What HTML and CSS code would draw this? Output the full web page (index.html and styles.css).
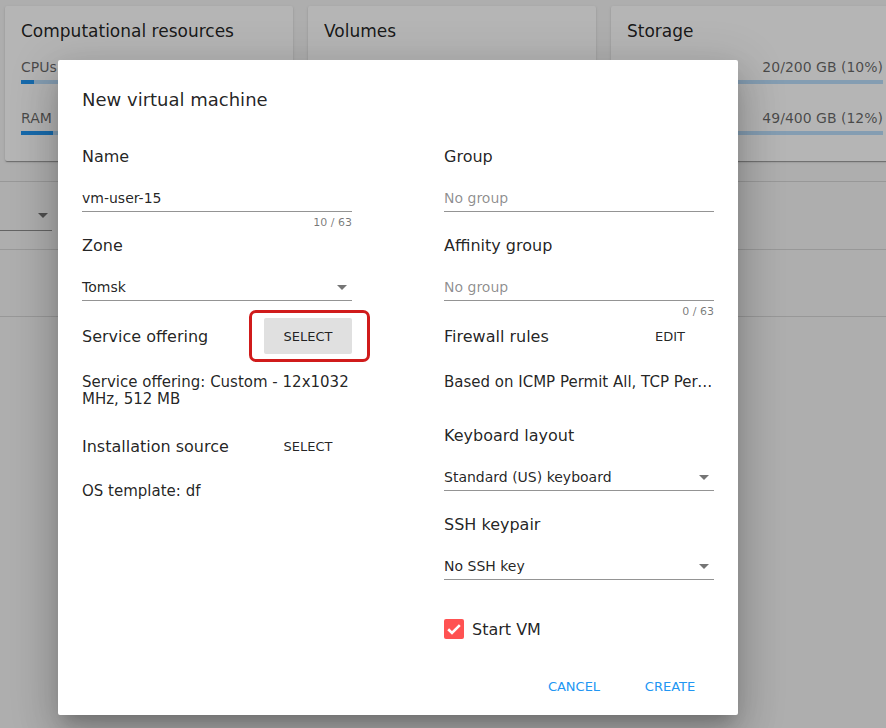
FILE: index.html
```html
<!DOCTYPE html>
<html lang="en">
<head>
<meta charset="utf-8">
<title>New virtual machine</title>
<link rel="stylesheet" href="styles.css">
</head>
<body>
<div class="page">
  <div class="cards">
    <section class="card">
      <h2 class="card-title">Computational resources</h2>
      <div class="stat">
        <div class="stat-row"><span>CPUs</span><span>2/40 (5%)</span></div>
        <div class="bar"><div class="bar-fill" style="width:5%"></div></div>
      </div>
      <div class="stat">
        <div class="stat-row"><span>RAM</span><span>512/4096 MB (12%)</span></div>
        <div class="bar"><div class="bar-fill" style="width:12.5%"></div></div>
      </div>
    </section>
    <section class="card">
      <h2 class="card-title">Volumes</h2>
      <div class="stat">
        <div class="stat-row"><span>Volumes</span><span>1/20 (5%)</span></div>
        <div class="bar"><div class="bar-fill" style="width:5%"></div></div>
      </div>
      <div class="stat">
        <div class="stat-row"><span>Snapshots</span><span>0/20 (0%)</span></div>
        <div class="bar"><div class="bar-fill" style="width:0%"></div></div>
      </div>
    </section>
    <section class="card">
      <h2 class="card-title">Storage</h2>
      <div class="stat">
        <div class="stat-row"><span>Primary</span><span>20/200 GB (10%)</span></div>
        <div class="bar"><div class="bar-fill" style="width:10%"></div></div>
      </div>
      <div class="stat">
        <div class="stat-row"><span>Secondary</span><span>49/400 GB (12%)</span></div>
        <div class="bar"><div class="bar-fill" style="width:12%"></div></div>
      </div>
    </section>
  </div>
  <div class="list">
    <div class="filter-row">
      <div class="filter-select"><span class="arrow"></span></div>
    </div>
    <div class="list-row"></div>
  </div>
</div>

<div class="backdrop"></div>

<div class="dialog">
  <h1 class="dialog-title">New virtual machine</h1>
  <div class="dialog-grid">
    <div class="col">
      <div class="field">
        <span class="field-label">Name</span>
        <div class="input"><span>vm-user-15</span></div>
        <div class="hint">10 / 63</div>
      </div>
      <div class="field">
        <span class="field-label">Zone</span>
        <div class="input"><span>Tomsk</span><span class="arrow"></span></div>
        <div class="hint"></div>
      </div>
      <div class="row row-after-field">
        <span class="row-label">Service offering</span>
        <span class="btn-wrap">
          <button class="btn btn-raised">SELECT</button>
          <span class="highlight"></span>
        </span>
      </div>
      <p class="desc">Service offering: Custom - 12x1032 MHz, 512 MB</p>
      <div class="row row-install">
        <span class="row-label">Installation source</span>
        <button class="btn">SELECT</button>
      </div>
      <p class="desc desc-os">OS template: df</p>
    </div>

    <div class="col">
      <div class="field">
        <span class="field-label">Group</span>
        <div class="input"><span class="placeholder">No group</span></div>
        <div class="hint"></div>
      </div>
      <div class="field">
        <span class="field-label">Affinity group</span>
        <div class="input"><span class="placeholder">No group</span></div>
        <div class="hint">0 / 63</div>
      </div>
      <div class="row row-after-field">
        <span class="row-label">Firewall rules</span>
        <button class="btn">EDIT</button>
      </div>
      <p class="desc desc-ellipsis">Based on ICMP Permit All, TCP Permit All, UDP Permit All</p>
      <div class="field field-keyboard">
        <span class="field-label">Keyboard layout</span>
        <div class="input"><span>Standard (US) keyboard</span><span class="arrow"></span></div>
        <div class="hint"></div>
      </div>
      <div class="field">
        <span class="field-label">SSH keypair</span>
        <div class="input"><span>No SSH key</span><span class="arrow"></span></div>
        <div class="hint"></div>
      </div>
      <label class="check">
        <span class="check-box">
          <svg viewBox="0 0 20 20" width="20" height="20"><path d="M4.2 10.3 8 14 15.8 6.2" fill="none" stroke="#fff" stroke-width="2.6"/></svg>
        </span>
        <span class="check-label">Start VM</span>
      </label>
    </div>
  </div>
  <div class="actions">
    <button class="btn btn-primary">CANCEL</button>
    <button class="btn btn-primary">CREATE</button>
  </div>
</div>
</body>
</html>
```

FILE: styles.css
```css
* {
  box-sizing: border-box;
}

html,
body {
  margin: 0;
}

body {
  position: relative;
  width: 886px;
  height: 728px;
  overflow: hidden;
  background: #f5f5f5;
  font-family: "DejaVu Sans", sans-serif;
  color: rgba(0, 0, 0, 0.87);
}

/* ---------- background page ---------- */
.page {
  width: 900px;
  padding: 6px 0 0 5px;
}

.cards {
  display: flex;
  gap: 15px;
}

.card {
  flex: 0 0 288px;
  height: 155px;
  padding: 13px 16px 0;
  background: #fff;
  border-radius: 2px;
  box-shadow: 0 2px 1px -1px rgba(0, 0, 0, 0.2), 0 1px 1px 0 rgba(0, 0, 0, 0.14), 0 1px 3px 0 rgba(0, 0, 0, 0.12);
}

.card-title {
  margin: 0;
  font-size: 17px;
  font-weight: normal;
  line-height: 24px;
}

.stat {
  margin-top: 15px;
}

.stat + .stat {
  margin-top: 25px;
}

.stat-row {
  display: flex;
  justify-content: space-between;
  font-size: 14px;
  line-height: 18px;
  color: rgba(0, 0, 0, 0.6);
}

.bar {
  height: 4px;
  margin-top: 4px;
  background: #bbdefb;
}

.bar-fill {
  height: 100%;
  background: #2196f3;
}

.list {
  margin: 20px 0 0 -5px;
  border-top: 1px solid rgba(0, 0, 0, 0.12);
}

.filter-row {
  height: 68px;
  padding-top: 18px;
  border-bottom: 1px solid rgba(0, 0, 0, 0.12);
}

.filter-select {
  display: flex;
  align-items: center;
  justify-content: flex-end;
  width: 52px;
  height: 31px;
  border-bottom: 1px solid rgba(0, 0, 0, 0.42);
}

.filter-select .arrow {
  margin-right: 4px;
}

.list-row {
  height: 67px;
  border-bottom: 1px solid rgba(0, 0, 0, 0.12);
}

.backdrop {
  position: absolute;
  inset: 0;
  background: rgba(0, 0, 0, 0.29);
}

/* ---------- dialog ---------- */
.dialog {
  position: absolute;
  left: 58px;
  top: 60px;
  width: 680px;
  height: 655px;
  padding: 24px;
  background: #fff;
  border-radius: 2px;
  box-shadow: 0 11px 15px -7px rgba(0, 0, 0, 0.2), 0 24px 38px 3px rgba(0, 0, 0, 0.14), 0 9px 46px 8px rgba(0, 0, 0, 0.12);
}

.dialog-title {
  margin: 0 0 31px;
  font-size: 18px;
  font-weight: normal;
  line-height: 32px;
}

.dialog-grid {
  display: grid;
  grid-template-columns: 270px 270px;
  column-gap: 92px;
  align-items: start;
}

.field {
  margin-bottom: 6px;
}

.field-label {
  display: block;
  font-size: 16px;
  line-height: 20px;
}

.input {
  display: flex;
  align-items: center;
  justify-content: space-between;
  margin-top: 21px;
  padding-bottom: 3px;
  border-bottom: 1px solid rgba(0, 0, 0, 0.42);
  font-size: 14px;
  line-height: 20px;
}

.placeholder {
  color: rgba(0, 0, 0, 0.45);
}

.arrow {
  width: 0;
  height: 0;
  margin-right: 5px;
  border-left: 5px solid transparent;
  border-right: 5px solid transparent;
  border-top: 5px solid rgba(0, 0, 0, 0.54);
}

.hint {
  height: 14px;
  margin-top: 4px;
  font-size: 11px;
  line-height: 14px;
  text-align: right;
  color: rgba(0, 0, 0, 0.54);
}

.row {
  display: flex;
  align-items: center;
  justify-content: space-between;
  height: 36px;
}

.row-after-field {
  margin-top: -7px;
}

.row-install {
  margin-top: 20px;
}

.row-label {
  font-size: 16px;
}

.btn-wrap {
  position: relative;
  display: inline-flex;
}

.btn {
  min-width: 88px;
  height: 36px;
  padding: 0 8px;
  border: 0;
  border-radius: 2px;
  background: transparent;
  font-family: inherit;
  font-size: 13px;
  font-weight: 500;
  color: rgba(0, 0, 0, 0.87);
}

.btn-raised {
  background: #e0e0e0;
}

.btn-primary {
  color: #2196f3;
}

.highlight {
  position: absolute;
  left: -15px;
  right: -18px;
  top: -8px;
  bottom: -8px;
  border: 3.5px solid #d01b1b;
  border-radius: 7px;
}

.desc {
  margin: 20px 0 0;
  font-size: 15px;
  line-height: 17px;
}

.desc-os {
  margin-top: 19px;
}

.desc-ellipsis {
  white-space: nowrap;
  overflow: hidden;
  text-overflow: ellipsis;
}

.field-keyboard {
  margin-top: 35px;
}

.check {
  display: flex;
  align-items: center;
  gap: 8px;
  margin-top: 21px;
  height: 20px;
}

.check-box {
  display: flex;
  width: 20px;
  height: 20px;
  border-radius: 2px;
  background: #ff5252;
}

.check-label {
  font-size: 16px;
}

.actions {
  display: flex;
  justify-content: flex-end;
  gap: 8px;
  margin-top: 29px;
}
```
